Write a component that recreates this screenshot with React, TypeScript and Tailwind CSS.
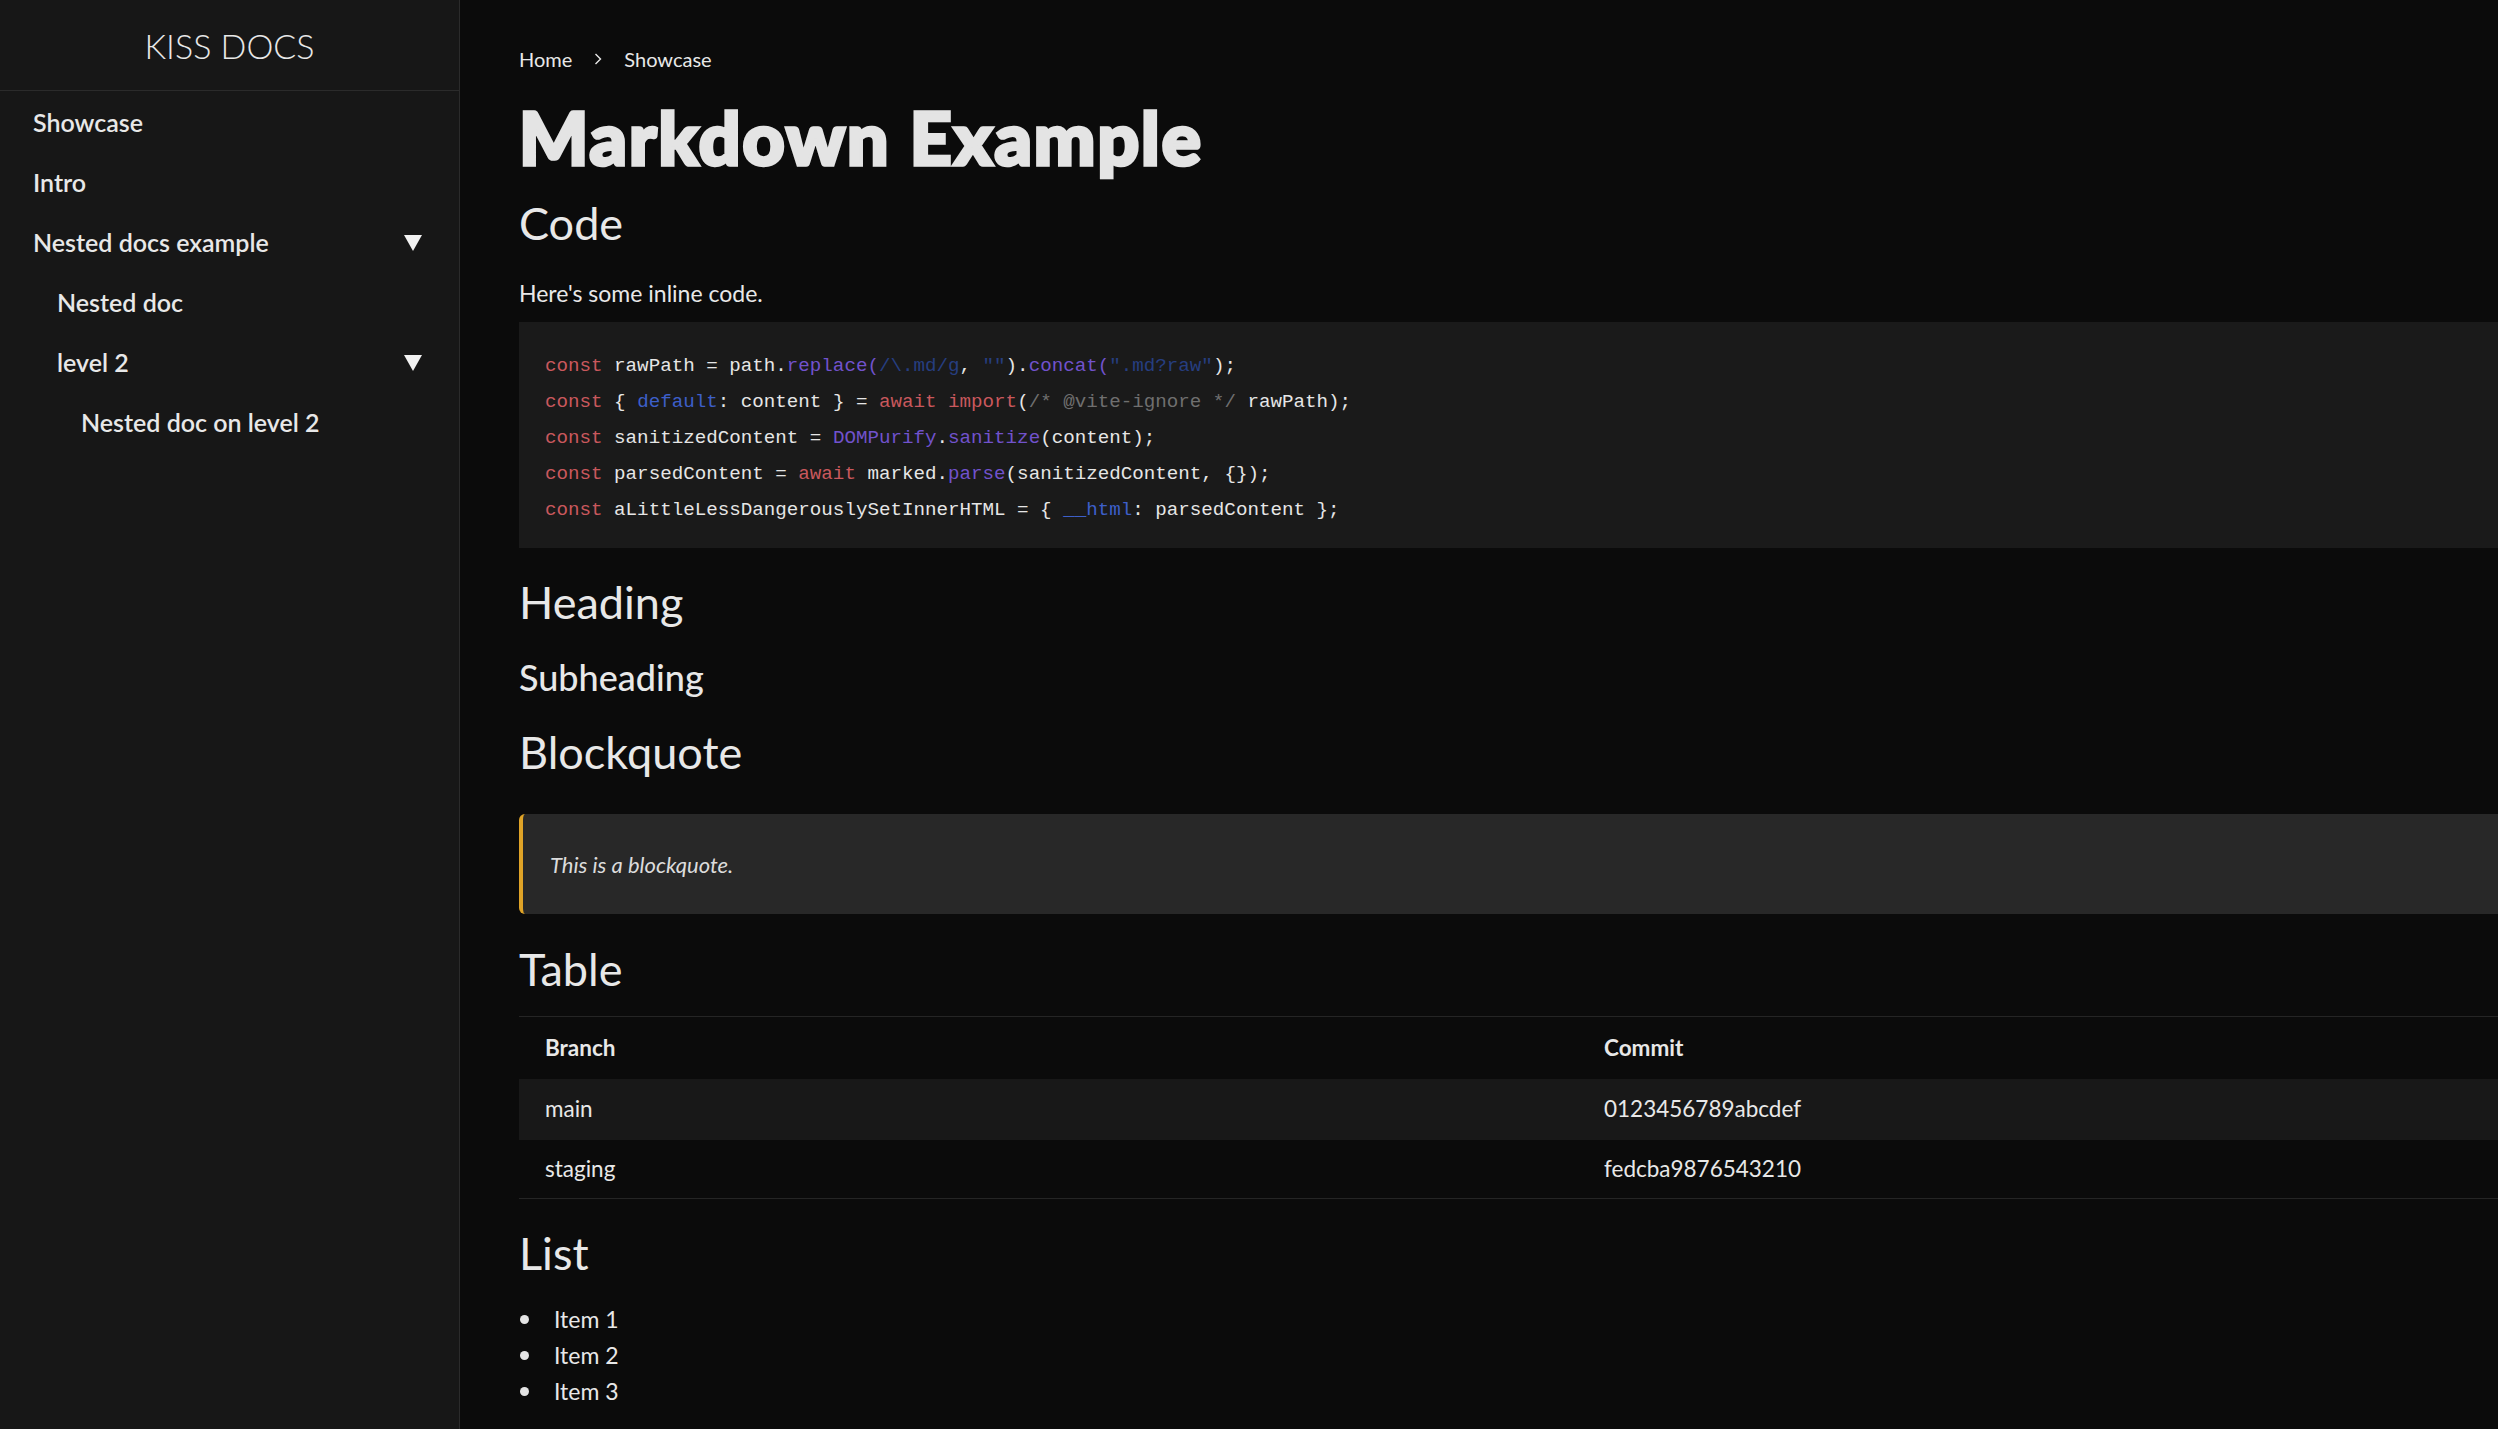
import React from 'react';

type Tok = [string, string];

const K = 'text-[#c9585d]';
const F = 'text-[#7152cc]';
const S = 'text-[#263e80]';
const P = 'text-[#3d5fc9]';
const C = 'text-[#6f6f6f]';
const W = 'text-[#e6e6e6]';

const codeLines: Tok[][] = [
  [[K, 'const'], [W, ' rawPath = path.'], [F, 'replace('], [S, '/\\.md/g'], [W, ', '], [S, '""'], [W, ').'], [F, 'concat('], [S, '".md?raw"'], [W, ');']],
  [[K, 'const'], [W, ' { '], [P, 'default'], [W, ': content } = '], [K, 'await'], [W, ' '], [K, 'import'], [W, '('], [C, '/* @vite-ignore */'], [W, ' rawPath);']],
  [[K, 'const'], [W, ' sanitizedContent = '], [F, 'DOMPurify'], [W, '.'], [F, 'sanitize'], [W, '(content);']],
  [[K, 'const'], [W, ' parsedContent = '], [K, 'await'], [W, ' marked.'], [F, 'parse'], [W, '(sanitizedContent, {});']],
  [[K, 'const'], [W, ' aLittleLessDangerouslySetInnerHTML = { '], [P, '__html'], [W, ': parsedContent };']],
];

const Triangle = () => (
  <svg width="18" height="16" viewBox="0 0 18 16" className="shrink-0">
    <path d="M0 0 H18 L9 16 Z" fill="#f2f2f2" />
  </svg>
);

const Chevron = () => (
  <svg width="8" height="14" viewBox="0 0 8 14" className="mx-[22px]">
    <path d="M1.5 2 L6.5 7 L1.5 12" fill="none" stroke="#e8e8e8" strokeWidth="1.4" />
  </svg>
);

const navItems = [
  { label: 'Showcase', depth: 0, toggle: false },
  { label: 'Intro', depth: 0, toggle: false },
  { label: 'Nested docs example', depth: 0, toggle: true },
  { label: 'Nested doc', depth: 1, toggle: false },
  { label: 'level 2', depth: 1, toggle: true },
  { label: 'Nested doc on level 2', depth: 2, toggle: false },
];

const depthPad = ['pl-[33px]', 'pl-[57px]', 'pl-[81px]'];

const App: React.FC = () => {
  return (
    <div className="flex min-h-screen bg-[#0b0b0b] font-['Lato',sans-serif] text-[#e8e8e8] overflow-hidden">
      {/* Sidebar */}
      <aside className="w-[460px] shrink-0 h-[1429px] bg-[#171717] border-r border-[#2b2b2b]">
        <div className="h-[91px] flex items-center justify-center border-b border-[#2b2b2b]">
          <span className="text-[34px] font-light">KISS DOCS</span>
        </div>
        <nav className="pt-[2px]">
          {navItems.map((item) => (
            <div
              key={item.label}
              className={`h-[60px] flex items-center justify-between pr-[37px] ${depthPad[item.depth]}`}
            >
              <span className="text-[25px] font-semibold">{item.label}</span>
              {item.toggle && <Triangle />}
            </div>
          ))}
        </nav>
      </aside>

      {/* Main */}
      <main className="flex-1 min-w-0 pl-[59px] pt-[45px]">
        {/* Breadcrumb */}
        <div className="flex items-center h-[28px] text-[20px] text-[#e8e8e8]">
          <span>Home</span>
          <Chevron />
          <span>Showcase</span>
        </div>

        <h1 className="mt-[21px] text-[73px] leading-[86px] font-black text-[#e4e4e4] tracking-[2px] [-webkit-text-stroke:3.5px_#e4e4e4]">
          Markdown Example
        </h1>

        <h2 className="mt-[15px] text-[45px] leading-[56px]">Code</h2>
        <p className="mt-[25px] text-[23px] leading-[34px]">Here's some inline code.</p>

        <pre className="mt-[12px] bg-[#1a1a1a] pt-[26px] pb-[20px] pl-[26px] font-['Liberation_Mono',monospace] text-[19.2px] leading-[36px]">
          {codeLines.map((line, i) => (
            <div key={i}>
              {line.map(([cls, txt], j) => (
                <span key={j} className={cls}>
                  {txt}
                </span>
              ))}
            </div>
          ))}
        </pre>

        <h2 className="mt-[26px] text-[45px] leading-[56px]">Heading</h2>
        <h3 className="mt-[24px] text-[36px] leading-[46px] font-medium">Subheading</h3>
        <h2 className="mt-[24px] text-[45px] leading-[56px]">Blockquote</h2>

        <blockquote className="mt-[34px] h-[100px] flex items-center bg-[#282828] border-l-4 border-[#dfa327] rounded-l-[6px] pl-[27px]">
          <span className="italic text-[22px] text-[#dcdcdc]">This is a blockquote.</span>
        </blockquote>

        <h2 className="mt-[27px] text-[45px] leading-[56px]">Table</h2>

        <table className="mt-[19px] w-full border-collapse text-[22.5px]">
          <thead>
            <tr className="h-[62px] border-t border-[#252525]">
              <th className="w-[1059px] text-left font-bold pl-[26px]">Branch</th>
              <th className="text-left font-bold pl-[26px]">Commit</th>
            </tr>
          </thead>
          <tbody>
            <tr className="h-[61px] bg-[#181818]">
              <td className="pl-[26px]">main</td>
              <td className="pl-[26px]">0123456789abcdef</td>
            </tr>
            <tr className="h-[59px] border-b border-[#252525]">
              <td className="pl-[26px]">staging</td>
              <td className="pl-[26px]">fedcba9876543210</td>
            </tr>
          </tbody>
        </table>

        <h2 className="mt-[26px] text-[45px] leading-[56px]">List</h2>
        <ul className="mt-[20px]">
          {['Item 1', 'Item 2', 'Item 3'].map((it) => (
            <li key={it} className="flex items-center h-[36px] text-[23px]">
              <span className="w-[9px] h-[9px] rounded-full bg-[#e4e4e4] ml-[1px] mr-[25px]" />
              {it}
            </li>
          ))}
        </ul>
      </main>
    </div>
  );
};

export default App;
